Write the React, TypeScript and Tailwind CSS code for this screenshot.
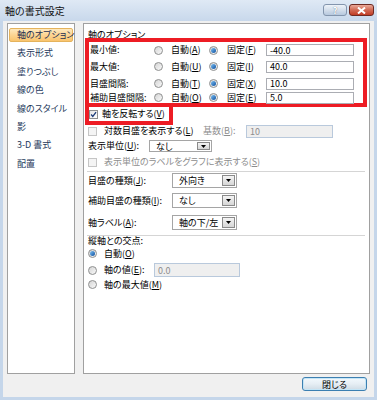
import React from "react"

const font =
  "font-['Noto_Sans_CJK_JP','Noto_Sans_CJK_SC',sans-serif] [font-feature-settings:'palt']"

function Key({ t, k, tail = "" }: { t: string; k: string; tail?: string }) {
  return (
    <span className="whitespace-nowrap">
      {t}(<span className="underline">{k}</span>){tail}
    </span>
  )
}

function Radio({ on }: { on?: boolean }) {
  return (
    <span className="w-[9px] h-[9px] rounded-full border border-[#8e8f8f] bg-gradient-to-br from-[#d4d4d4] to-[#fafafa] flex items-center justify-center shrink-0">
      {on && <span className="w-[5px] h-[5px] rounded-full bg-gradient-to-br from-[#7cc2f5] to-[#0a4f9e]" />}
    </span>
  )
}

function Check({ on, disabled }: { on?: boolean; disabled?: boolean }) {
  return (
    <span
      className={`w-[9px] h-[9px] border flex items-center justify-center shrink-0 ${
        disabled ? "border-[#c5c5c5] bg-[#f4f4f4]" : "border-[#8e8f8f] bg-gradient-to-br from-[#e4e4e4] to-white"
      }`}
    >
      {on && (
        <svg width="9" height="9" viewBox="0 0 9 9">
          <path d="M1.5 4.5 L3.6 7 L7.8 1.3" fill="none" stroke="#1b3a78" strokeWidth="1.6" />
        </svg>
      )}
    </span>
  )
}

function Select({ value, w, h }: { value: string; w: string; h: string }) {
  return (
    <div className={`${w} ${h} border border-[#a5a5a5] bg-white flex items-stretch shrink-0`}>
      <span className="flex-1 pl-[6px] flex items-center leading-none whitespace-nowrap overflow-hidden">{value}</span>
      <span className="w-[13px] m-[1px] border border-[#8a8a8a] bg-gradient-to-b from-[#f4f4f4] to-[#d6d6d6] flex items-center justify-center">
        <svg width="5" height="3" viewBox="0 0 5 3">
          <path d="M0 0 H5 L2.5 3 Z" fill="#000" />
        </svg>
      </span>
    </div>
  )
}

function Field({ value, w, h = "h-[12px]", disabled }: { value: string; w: string; h?: string; disabled?: boolean }) {
  return (
    <div
      className={`${w} ${h} border flex items-center pl-[3px] leading-none shrink-0 ${
        disabled ? "border-[#b9c9dc] bg-[#efefef] text-[#8d8d8d]" : "border-[#abadb3] bg-white"
      }`}
    >
      {value}
    </div>
  )
}

const menu = ["軸のオプション", "表示形式", "塗りつぶし", "線の色", "線のスタイル", "影", "3-D 書式", "配置"]

const fixedRows = [
  { label: "最小値:", a: "A", f: "F", v: "-40.0", h: "h-[16px]" },
  { label: "最大値:", a: "U", f: "I", v: "40.0", h: "h-[17px]" },
  { label: "目盛間隔:", a: "T", f: "X", v: "10.0", h: "h-[17px]" },
  { label: "補助目盛間隔:", a: "O", f: "E", v: "5.0", h: "h-[11px]" },
]

export default function App() {
  return (
    <div className={`w-[377px] h-[400px] flex flex-col bg-[#c5d6ea] text-[9px] leading-[10px] text-black ${font}`}>
      <div className="h-[21px] flex items-start pl-[5px] pr-[3px] bg-gradient-to-b from-[#dfe9f5] to-[#c8d8eb]">
        <span className="text-[10px] leading-[21px] text-[#111]">軸の書式設定</span>
        <div className="ml-auto mt-[4px] flex gap-[2px]">
          <div className="w-[24px] h-[12px] rounded-[3px] border border-[#8395ad] bg-gradient-to-b from-[#eef3f9] via-[#d3deeb] to-[#b7c8de] flex items-center justify-center">
            <span className="text-[9px] font-bold leading-none text-white [text-shadow:0_0_1px_#4a5a70]">?</span>
          </div>
          <div className="w-[25px] h-[12px] rounded-[3px] border border-[#6e2a22] bg-gradient-to-b from-[#e9a99a] via-[#d16a55] to-[#c13b24] flex items-center justify-center">
            <svg width="9" height="7" viewBox="0 0 9 7">
              <path d="M1 0.5 L8 6.5 M8 0.5 L1 6.5" stroke="#fff" strokeWidth="2" />
            </svg>
          </div>
        </div>
      </div>

      <div className="flex-1 mx-[3px] mb-[3px] bg-[#f0f0f0] flex flex-col px-[4px] pt-[2px]">
        <div className="flex gap-[8px] h-[351px]">
          <div className="w-[68px] border border-[#a0a0a0] bg-white flex flex-col pt-[4px] gap-[4.4px]">
            {menu.map((t, i) =>
              i === 0 ? (
                <div
                  key={t}
                  className="mx-[1px] h-[14px] rounded-[2px] border border-[#e5b35c] bg-gradient-to-b from-[#fee9bf] via-[#fcd592] to-[#f9c46d] pl-[7px] leading-[12px] text-[#1e2f52] whitespace-nowrap"
                >
                  {t}
                </div>
              ) : (
                <div key={t} className="h-[14px] pl-[9px] leading-[14px] text-[#1e395b] whitespace-nowrap">
                  {t}
                </div>
              )
            )}
          </div>

          <div className="w-[287px] border border-[#a0a0a0] bg-white flex flex-col px-[1px] pt-[4px]">
            <div className="h-[10px] leading-[14px] pl-[3px]">軸のオプション</div>

            <div className="w-[282px] border-4 border-[#ed1c24] flex flex-col">
              {fixedRows.map((r) => (
                <div key={r.label} className={`${r.h} flex items-center`}>
                  <span className="w-[65px] pl-[1px] whitespace-nowrap">{r.label}</span>
                  <Radio />
                  <span className="w-[38px] ml-[8px]">
                    <Key t="自動" k={r.a} />
                  </span>
                  <Radio on />
                  <span className="w-[39px] ml-[9px]">
                    <Key t="固定" k={r.f} />
                  </span>
                  <Field value={r.v} w="w-[88px]" />
                </div>
              ))}
            </div>

            <div className="w-[88px] -mt-[4px] border-4 border-[#ed1c24] h-[22px] flex items-center">
              <Check on />
              <span className="ml-[4px]">
                <Key t="軸を反転する" k="V" />
              </span>
            </div>

            <div className="h-[12px] flex items-center pl-[3px]">
              <Check disabled />
              <span className="w-[99px] ml-[7px]">
                <Key t="対数目盛を表示する" k="L" />
              </span>
              <span className="w-[43px] text-[#8d8d8d]">
                <Key t="基数" k="B" tail=":" />
              </span>
              <Field value="10" w="w-[87px]" h="h-[13px]" disabled />
            </div>

            <div className="mt-[3px] h-[12px] flex items-center pl-[3px]">
              <span className="w-[61px]">
                <Key t="表示単位" k="U" tail=":" />
              </span>
              <Select value="なし" w="w-[63px]" h="h-[12px]" />
            </div>

            <div className="mt-[4px] h-[12px] flex items-center pl-[3px] text-[#8d8d8d]">
              <Check disabled />
              <span className="ml-[7px]">
                <Key t="表示単位のラベルをグラフに表示する" k="S" />
              </span>
            </div>

            <div className="mt-[3px] ml-[2px] mr-[3px] h-px bg-[#d5d5d5]" />

            <div className="mt-[1px] h-[15px] flex items-center pl-[3px]">
              <span className="w-[84px]">
                <Key t="目盛の種類" k="J" tail=":" />
              </span>
              <Select value="外向き" w="w-[65px]" h="h-[15px]" />
            </div>
            <div className="mt-[5px] h-[15px] flex items-center pl-[3px]">
              <span className="w-[84px]">
                <Key t="補助目盛の種類" k="I" tail=":" />
              </span>
              <Select value="なし" w="w-[65px]" h="h-[15px]" />
            </div>
            <div className="mt-[7px] h-[15px] flex items-center pl-[3px]">
              <span className="w-[84px]">
                <Key t="軸ラベル" k="A" tail=":" />
              </span>
              <Select value="軸の下/左" w="w-[65px]" h="h-[15px]" />
            </div>

            <div className="mt-[5px] ml-[2px] mr-[3px] h-px bg-[#d5d5d5]" />

            <div className="h-[9px] leading-[9px] pl-[3px]">縦軸との交点:</div>
            <div className="mt-[2px] h-[13px] flex items-center pl-[3px]">
              <Radio on />
              <span className="ml-[7px]">
                <Key t="自動" k="O" />
              </span>
            </div>
            <div className="mt-[3px] h-[14px] flex items-center pl-[3px]">
              <Radio />
              <span className="w-[50px] ml-[7px]">
                <Key t="軸の値" k="E" tail=":" />
              </span>
              <Field value="0.0" w="w-[86px]" h="h-[14px]" disabled />
            </div>
            <div className="mt-[2px] h-[11px] flex items-center pl-[3px]">
              <Radio />
              <span className="ml-[7px]">
                <Key t="軸の最大値" k="M" />
              </span>
            </div>
          </div>
        </div>

        <div className="flex justify-end mt-[3px] pr-[3px]">
          <button className="w-[65px] h-[14px] rounded-[3px] border border-[#3c7fb1] bg-gradient-to-b from-[#f3f9fd] via-[#e6eef4] to-[#cfdbe5] shadow-[inset_0_0_0_1px_#c4e5f6] flex items-center justify-center text-[9px] leading-none text-black">
            閉じる
          </button>
        </div>
      </div>
    </div>
  )
}
